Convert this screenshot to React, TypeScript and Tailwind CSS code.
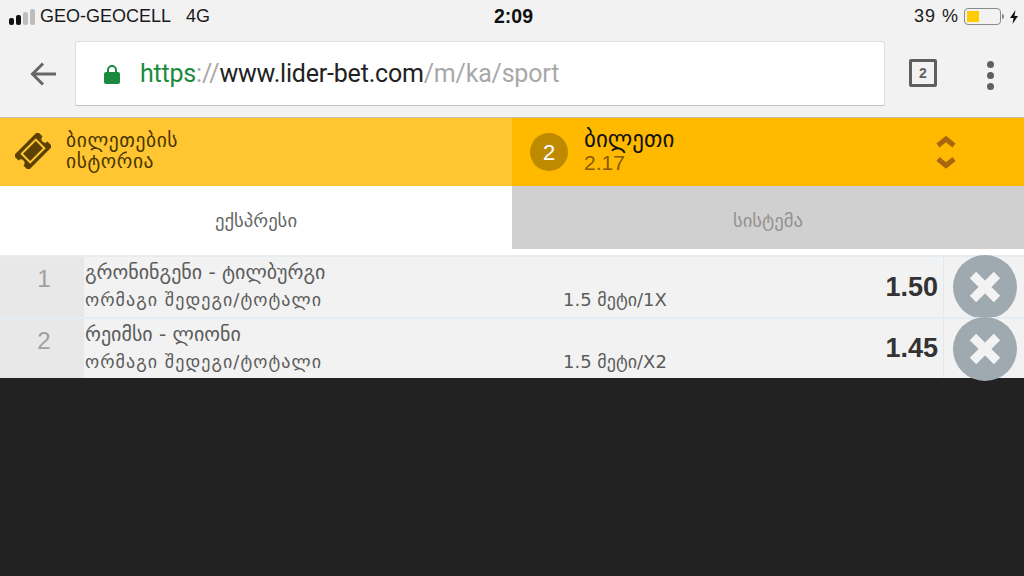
import React from "react";

const sans = "font-['Liberation_Sans','DejaVu_Sans',sans-serif]";
const geo = "font-['DejaVu_Sans',sans-serif]";

function Row({ n, title, market, pick, odd, h }: { n: string; title: string; market: string; pick: string; odd: string; h: string }) {
  return (
    <div className={`flex ${h} border-t-2 border-[#e3edf3] bg-[#f2f2f2]`}>
      <div className={`w-[84px] shrink-0 bg-[#e8e8e8] flex items-center justify-center pl-1 pb-[16px] text-[24px] text-[#a0a0a0] ${sans}`}>{n}</div>
      <div className="flex-1 relative min-w-0 pl-[1px] pt-[3px]">
        <div className={`${geo} text-[20px] leading-[24px] text-[#5c5c5c]`}>{title}</div>
        <div className="flex items-center mt-[4px]">
          <div className={`${geo} text-[18px] tracking-[1.05px] leading-[24px] text-[#5c5c5c] w-[478px]`}>{market}</div>
          <div className={`${geo} text-[18px] leading-[24px] text-[#5c5c5c]`}>{pick}</div>
        </div>
      </div>
      <div className={`w-[60px] shrink-0 flex items-center justify-end pr-[5px] text-[27px] font-bold text-[#333] ${sans}`}>{odd}</div>
      <div className="w-[81px] shrink-0 border-l border-[#dfe9f0] flex items-center pl-[9px]">
        <div className="w-[64px] h-[64px] shrink-0 rounded-full bg-[#9fa9b0] flex items-center justify-center">
          <svg width="34" height="34" viewBox="0 0 34 34">
            <path d="M5 5 L29 29 M29 5 L5 29" stroke="#f3f3f3" strokeWidth="9" strokeLinecap="butt" />
          </svg>
        </div>
      </div>
    </div>
  );
}

export default function App() {
  return (
    <div className="w-[1024px] h-[576px] overflow-hidden flex flex-col bg-[#222222]">
      <div className="h-[33px] bg-[#f2f2f2] flex items-center justify-between pl-[9px] pr-[5px] relative">
        <div className={`flex items-center gap-[3px] text-[18px] text-[#1a1a1a] ${sans}`}>
          <svg width="30" height="18" viewBox="0 0 30 18" className="shrink-0">
            <rect x="0" y="10" width="5" height="7" rx="2" fill="#111" />
            <rect x="7" y="7" width="5" height="10" rx="2" fill="#111" />
            <rect x="14" y="4" width="5" height="13" rx="2" fill="#bdbdbd" />
            <rect x="21" y="1" width="5" height="16" rx="2" fill="#bdbdbd" />
          </svg>
          <span className="ml-[-2px]">GEO-GEOCELL</span>
          <span className="ml-[12px]">4G</span>
        </div>
        <div className={`absolute left-[494px] top-[5px] text-[19.5px] leading-[22px] font-bold text-[#111] ${sans}`}>2:09</div>
        <div className={`flex items-center text-[18px] text-[#1a1a1a] ${sans}`}>
          <span className="tracking-[1px]">39 %</span>
          <div className="ml-[5px] w-[37px] h-[17px] rounded-[4px] border border-[#8a8a8a] p-[2px]">
            <div className="w-[12px] h-full bg-[#ffcc00]" />
          </div>
          <div className="w-[2px] h-[5px] bg-[#8a8a8a] ml-[1px] rounded-r-sm" />
          <svg width="10" height="14" viewBox="0 0 10 14" className="ml-[5px]">
            <path d="M6.5 0 L1 8 H4.5 L3.5 14 L9 6 H5.5 Z" fill="#111" />
          </svg>
        </div>
      </div>

      <div className="h-[84px] bg-[#f2f2f2] flex items-start relative">
        <svg width="30" height="30" viewBox="0 0 30 30" className="ml-[29px] mt-[26px] shrink-0">
          <path d="M27 15 H4 M14 4.5 L3.5 15 L14 25.5" fill="none" stroke="#666" strokeWidth="3" />
        </svg>
        <div className={`ml-[16px] mt-[8px] w-[810px] h-[65px] shrink-0 bg-white rounded-[3px] border border-[#dedede] border-b-[#c4c4c4] flex items-center pl-[28px] text-[25px] tracking-[-0.2px] font-['Roboto',sans-serif]`}>
          <svg width="16" height="20" viewBox="0 0 16 20" className="shrink-0">
            <path d="M4 9 V6 a4 4 0 0 1 8 0 V9" fill="none" stroke="#1b8a3e" strokeWidth="2" />
            <rect x="0" y="8" width="16" height="12" rx="2" fill="#1b8a3e" />
          </svg>
          <span className="ml-[20px] text-[#1b8a3e]">https</span>
          <span className="text-[#a8a8a8]">://</span>
          <span className="text-[#222]">www.lider-bet.com</span>
          <span className="text-[#a8a8a8]">/m/ka/sport</span>
        </div>
        <div className={`ml-[24px] mt-[26px] w-[28px] h-[28px] shrink-0 rounded-[2px] border-[3px] border-[#5f5f5f] flex items-center justify-center text-[14px] font-bold text-[#5f5f5f] ${sans}`}>2</div>
        <div className="ml-[50px] mt-[28px] flex flex-col gap-[4px] shrink-0">
          <div className="w-[7px] h-[7px] rounded-full bg-[#5f5f5f]" />
          <div className="w-[7px] h-[7px] rounded-full bg-[#5f5f5f]" />
          <div className="w-[7px] h-[7px] rounded-full bg-[#5f5f5f]" />
        </div>
      </div>

      <div className="h-[1px] bg-[#c9c2a8]" />

      <div className="flex h-[68px]">
        <div className="w-[512px] bg-[#ffc631] flex items-center">
          <svg width="36" height="36" viewBox="0 0 36 36" className="ml-[15px] mb-[3px] shrink-0">
            <g transform="rotate(-45 18 18)">
              <path fill="#5c4200" d="M1 7.5 H35 V14.5 a3.5 3.5 0 0 0 0 7 V28.5 H1 V21.5 a3.5 3.5 0 0 0 0 -7 Z" />
              <rect x="8" y="12" width="20" height="12" fill="none" stroke="#ffc631" strokeWidth="2" />
            </g>
          </svg>
          <div className={`ml-[15px] pb-[2px] ${geo} text-[19.5px] tracking-[0.6px] leading-[21px] text-[#4a3500]`}>
            <div>ბილეთების</div>
            <div>ისტორია</div>
          </div>
        </div>
        <div className="w-[512px] bg-[#ffba00] flex items-center relative">
          <div className={`ml-[18px] w-[38px] h-[38px] shrink-0 rounded-full bg-[#bd8a00] flex items-center justify-center text-[22px] text-white ${sans}`}>2</div>
          <div className="ml-[16px] pb-[3px]">
            <div className={`${geo} text-[23px] leading-[24px] text-[#111]`}>ბილეთი</div>
            <div className={`${sans} text-[21px] leading-[22px] mt-[1px] text-[#8a5a00]`}>2.17</div>
          </div>
          <svg width="22" height="36" viewBox="0 0 22 36" className="absolute left-[423px] top-[16px]">
            <path d="M3 11.5 L11 5 L19 11.5" fill="none" stroke="#a9650f" strokeWidth="5" />
            <path d="M3 25 L11 31.5 L19 25" fill="none" stroke="#a9650f" strokeWidth="5" />
          </svg>
        </div>
      </div>

      <div className="flex h-[69px] bg-white">
        <div className={`w-[512px] h-[63px] pt-[8px] flex items-center justify-center text-[#666] ${geo} text-[18.7px]`}>ექსპრესი</div>
        <div className={`w-[512px] h-[63px] pt-[8px] bg-[#d0d0d0] flex items-center justify-center text-[#929292] ${geo} text-[18.7px]`}>სისტემა</div>
      </div>

      <Row n="1" title="გრონინგენი - ტილბურგი" market="ორმაგი შედეგი/ტოტალი" pick="1.5 მეტი/1X" odd="1.50" h="h-[62px]" />
      <Row n="2" title="რეიმსი - ლიონი" market="ორმაგი შედეგი/ტოტალი" pick="1.5 მეტი/X2" odd="1.45" h="h-[61px]" />
    </div>
  );
}
